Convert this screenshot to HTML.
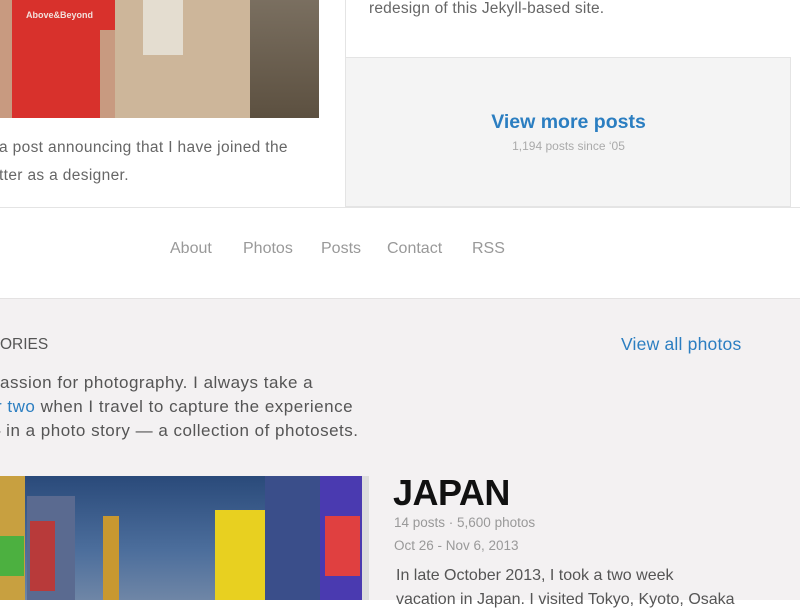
<!DOCTYPE html>
<html><head><meta charset="utf-8"><style>
*{margin:0;padding:0;box-sizing:border-box}
body{width:800px;height:600px;overflow:hidden;background:#fff;font-family:"Liberation Sans",sans-serif;position:relative}
.a{position:absolute;white-space:nowrap}
</style></head><body>
<div class="a" style="left:0;top:0;width:319px;height:118px;background:linear-gradient(90deg,#8a7a68 0,#a89682 60%,#6f6353 100%)">
 <div class="a" style="left:0;top:0;width:120px;height:118px;background:#d8312c"></div>
 <div class="a" style="left:0;top:0;width:12px;height:118px;background:#c89a80"></div>
 <div class="a" style="left:100px;top:30px;width:20px;height:88px;background:#c89a80"></div>
 <div class="a" style="left:115px;top:0;width:135px;height:118px;background:#cdb69a"></div>
 <div class="a" style="left:143px;top:0;width:40px;height:55px;background:#e4ddd0"></div>
 <div class="a" style="left:250px;top:0;width:69px;height:118px;background:linear-gradient(180deg,#7a6f60,#5c5040)"></div>
 <div class="a" style="left:26px;top:10px;color:#f2e0dc;font-size:9px;font-weight:bold">Above&amp;Beyond</div>
</div>
<div class="a" style="left:-1px;top:134px;font-size:15.5px;color:#666;line-height:28px;letter-spacing:0.35px">a post announcing that I have joined the<br>tter as a designer.</div>
<div class="a" style="left:345px;top:0;width:1px;height:207px;background:#e4e4e4"></div>
<div class="a" style="left:369px;top:0;font-size:15.5px;color:#666;letter-spacing:0.2px">redesign of this Jekyll-based site.</div>
<div class="a" style="left:346px;top:57px;width:445px;height:150px;background:#f4f4f4;border:1px solid #e4e4e4;border-left:none"></div>
<div class="a" style="left:346px;top:111px;width:445px;text-align:center;font-size:19.5px;font-weight:bold;color:#2b7ec1">View more posts</div>
<div class="a" style="left:346px;top:139px;width:445px;text-align:center;font-size:12px;color:#aaa">1,194 posts since ‘05</div>
<div class="a" style="left:0;top:207px;width:800px;height:1px;background:#e4e4e4"></div>
<div class="a" style="left:170px;top:240px;font-size:16px;color:#999">About</div>
<div class="a" style="left:243px;top:240px;font-size:16px;color:#999">Photos</div>
<div class="a" style="left:321px;top:240px;font-size:16px;color:#999">Posts</div>
<div class="a" style="left:387px;top:240px;font-size:16px;color:#999">Contact</div>
<div class="a" style="left:472px;top:240px;font-size:16px;color:#999">RSS</div>
<div class="a" style="left:0;top:298px;width:800px;height:302px;background:#f3f1f2;border-top:1px solid #e4e2e2"></div>
<div class="a" style="left:0;top:336px;font-size:15.5px;color:#555">ORIES</div>
<div class="a" style="left:621px;top:334px;font-size:17.5px;color:#2b7ec1;letter-spacing:0.2px">View all photos</div>
<div class="a" style="left:0;top:371px;font-size:17px;color:#555;line-height:24px;letter-spacing:0.5px">assion for photography. I always take a</div>
<div class="a" style="left:-4px;top:395px;font-size:17px;color:#555;line-height:24px;letter-spacing:0.5px"><span style="color:#2b7ec1">r two</span> when I travel to capture the experience</div>
<div class="a" style="left:-9px;top:419px;font-size:17px;color:#555;line-height:24px;letter-spacing:0.5px">– in a photo story — a collection of photosets.</div>
<div class="a" style="left:0;top:476px;width:369px;height:124px;background:linear-gradient(180deg,#2a4a7a 0,#4c6e9c 60%,#6f86a6 100%);overflow:hidden">
 <div class="a" style="left:0;top:0;width:25px;height:124px;background:#c8a040"></div>
 <div class="a" style="left:0;top:60px;width:24px;height:40px;background:#4cb040"></div>
 <div class="a" style="left:27px;top:20px;width:48px;height:104px;background:#5a6a90"></div>
 <div class="a" style="left:30px;top:45px;width:25px;height:70px;background:#b83a3a"></div>
 <div class="a" style="left:103px;top:40px;width:16px;height:84px;background:#c89830"></div>
 <div class="a" style="left:215px;top:34px;width:50px;height:90px;background:#e8d020"></div>
 <div class="a" style="left:265px;top:0;width:55px;height:124px;background:#3a4e8a"></div>
 <div class="a" style="left:320px;top:0;width:42px;height:124px;background:#4a3ab0"></div>
 <div class="a" style="left:325px;top:40px;width:35px;height:60px;background:#e04040"></div>
 <div class="a" style="left:362px;top:0;width:7px;height:124px;background:#ddd"></div>
</div>
<div class="a" style="left:393px;top:472px;font-size:36px;font-weight:bold;color:#111;letter-spacing:-0.5px">JAPAN</div>
<div class="a" style="left:394px;top:515px;font-size:13.5px;color:#999">14 posts · 5,600 photos</div>
<div class="a" style="left:394px;top:538px;font-size:13.5px;color:#999">Oct 26 - Nov 6, 2013</div>
<div class="a" style="left:396px;top:564px;font-size:16px;color:#555;line-height:24px">In late October 2013, I took a two week<br>vacation in Japan. I visited Tokyo, Kyoto, Osaka</div>
</body></html>
